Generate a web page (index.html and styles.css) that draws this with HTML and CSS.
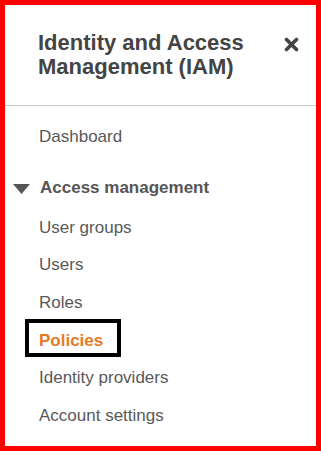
FILE: index.html
```html
<!DOCTYPE html>
<html>
<head>
<meta charset="utf-8">
<link rel="stylesheet" href="styles.css">
</head>
<body>
<div class="frame">
  <header class="panel-head">
    <h1 class="title">Identity and Access Management (IAM)</h1>
    <button class="close" aria-label="Close">
      <svg width="15" height="15" viewBox="0 0 15 15"><path d="M2.5 2.5 L12.5 12.5 M12.5 2.5 L2.5 12.5" stroke="#444" stroke-width="3.6" stroke-linecap="round"/></svg>
    </button>
  </header>
  <nav class="nav">
    <a class="item">Dashboard</a>
    <div class="section">
      <div class="section-head">
        <svg class="caret" width="17" height="10" viewBox="0 0 17 10"><path d="M0 0 H17 L8.5 10 Z" fill="#555"/></svg>
        <span>Access management</span>
      </div>
      <a class="item">User groups</a>
      <a class="item">Users</a>
      <a class="item">Roles</a>
      <a class="item active"><span class="marked">Policies</span></a>
      <a class="item">Identity providers</a>
      <a class="item">Account settings</a>
    </div>
  </nav>
</div>
</body>
</html>
```
FILE: styles.css
```css
html, body {
  margin: 0;
  padding: 0;
  background: #fff;
}
.frame {
  width: 321px;
  height: 451px;
  box-sizing: border-box;
  border: 5px solid #ff0000;
  background: #fff;
  font-family: "Liberation Sans", Arial, sans-serif;
  overflow: hidden;
}
.panel-head {
  display: flex;
  justify-content: space-between;
  align-items: flex-start;
  padding: 26px 17px 26px 33px;
  border-bottom: 1px solid #cccccc;
}
.title {
  margin: 0;
  font-size: 22px;
  line-height: 24px;
  font-weight: bold;
  color: #444444;
  width: 230px;
}
.close {
  border: 0;
  background: none;
  padding: 0;
  margin-top: 6px;
  width: 15px;
  height: 15px;
  display: block;
}
.close svg {
  display: block;
}
.nav {
  padding-top: 12px;
}
.item {
  display: block;
  padding: 7.85px 0 7.85px 34px;
  font-size: 17px;
  line-height: 22px;
  color: #595959;
  text-decoration: none;
}
.section {
  margin-top: 13px;
}
.section-head {
  display: flex;
  align-items: center;
  gap: 10px;
  padding: 7.85px 0 10.35px 8px;
  font-size: 17px;
  line-height: 22px;
  font-weight: bold;
  color: #555555;
}
.caret {
  display: block;
  margin-top: 3px;
}
.item.active {
  color: #e47a1f;
  font-weight: bold;
}
.marked {
  position: relative;
}
.marked::after {
  content: "";
  position: absolute;
  left: -14px;
  top: -12px;
  width: 88px;
  height: 30px;
  border: 4px solid #000;
}
```
